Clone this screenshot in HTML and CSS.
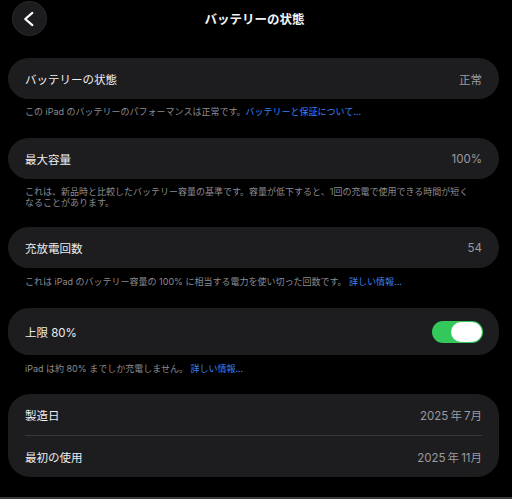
FILE: index.html
```html
<!DOCTYPE html>
<html lang="ja">
<head>
<meta charset="utf-8">
<title>バッテリーの状態</title>
<link rel="stylesheet" href="styles.css">
</head>
<body>
<div class="page">
  <header class="header">
    <button class="back" aria-label="戻る">
      <svg width="35" height="35" viewBox="0 0 35 35"><path d="M20.5 11.5 L13 18 L20.5 24.5" fill="none" stroke="#fff" stroke-width="2.3" stroke-linecap="round" stroke-linejoin="round"/></svg>
    </button>
    <h1 class="title">バッテリーの状態</h1>
  </header>

  <section class="group g1">
    <div class="card">
      <div class="row"><span class="label">バッテリーの状態</span><span class="value">正常</span></div>
    </div>
    <p class="note">この iPad のバッテリーのパフォーマンスは正常です。<a class="link">バッテリーと保証について...</a></p>
  </section>

  <section class="group g2">
    <div class="card">
      <div class="row"><span class="label">最大容量</span><span class="value">100%</span></div>
    </div>
    <p class="note">これは、新品時と比較したバッテリー容量の基準です。容量が低下すると、1回の充電で使用できる時間が短くなることがあります。</p>
  </section>

  <section class="group g3">
    <div class="card">
      <div class="row"><span class="label">充放電回数</span><span class="value">54</span></div>
    </div>
    <p class="note">これは iPad のバッテリー容量の 100% に相当する電力を使い切った回数です。 <a class="link">詳しい情報...</a></p>
  </section>

  <section class="group g4">
    <div class="card">
      <div class="row tall"><span class="label">上限 80%</span><span class="toggle"><span class="knob"></span></span></div>
    </div>
    <p class="note">iPad は約 80% までしか充電しません。 <a class="link">詳しい情報...</a></p>
  </section>

  <section class="group g5">
    <div class="card multi">
      <div class="row"><span class="label">製造日</span><span class="value">2025&#8201;年&#8201;7月</span></div>
      <div class="divider"></div>
      <div class="row"><span class="label">最初の使用</span><span class="value">2025&#8201;年&#8201;11月</span></div>
    </div>
  </section>
  <div class="edge"></div>
</div>
</body>
</html>
```

FILE: styles.css
```css
html, body {
  margin: 0;
  padding: 0;
  background: #000;
}
body {
  font-family: "Inter", "Noto Sans CJK JP", sans-serif;
  color: #f2f2f4;
  width: 512px;
  height: 499px;
  overflow: hidden;
}
.page {
  display: flex;
  flex-direction: column;
  padding: 0 13px 0 8px;
  height: 499px;
}
.header {
  position: relative;
  height: 36px;
  display: flex;
  align-items: center;
  justify-content: center;
}
.back {
  position: absolute;
  left: 4px;
  top: 1px;
  width: 35px;
  height: 35px;
  padding: 0;
  border-radius: 50%;
  border: 1px solid #2a2a2c;
  background: #1c1c1e;
  display: flex;
  align-items: center;
  justify-content: center;
}
.back svg { display: block; }
.title {
  margin: 0;
  font-size: 12.5px;
  font-weight: 700;
  color: #f4f4f6;
  padding-left: 2px;
}
.group {
  display: flex;
  flex-direction: column;
}
.g1 { margin-top: 22px; }
.g2 { margin-top: 21px; }
.g3 { margin-top: 19px; }
.g4 { margin-top: 21px; }
.g5 { margin-top: 20px; }
.card {
  background: #1d1d1f;
  border-radius: 21px;
  padding: 0 17px 0 17px;
}
.card.multi { border-radius: 22px; }
.row {
  height: 41px;
  display: flex;
  align-items: center;
  justify-content: space-between;
}
.row.tall {
  height: 47px;
  padding-right: 0;
}
.label {
  font-size: 11.5px;
  color: #eeeef0;
  font-weight: 400;
}
.value {
  font-size: 11.5px;
  color: #9a9a9f;
}
.divider {
  height: 1px;
  background: #38383a;
}
.note {
  margin: 7px 30px 0 17px;
  font-size: 9px;
  line-height: 11px;
  color: #8b8b90;
}
.g3 .note, .g4 .note { margin-top: 8px; }
.link {
  color: #3b82f6;
}
.toggle {
  width: 51px;
  height: 22px;
  border-radius: 11px;
  background: #32c85a;
  display: flex;
  align-items: center;
  justify-content: flex-end;
  padding-right: 1px;
  box-sizing: border-box;
  margin-right: -1px;
}
.knob {
  width: 31px;
  height: 20px;
  border-radius: 10px;
  background: #fff;
}
.edge {
  margin-top: auto;
  height: 2px;
  background: #3a3a3c;
  margin-left: -8px;
  margin-right: -13px;
}
```
